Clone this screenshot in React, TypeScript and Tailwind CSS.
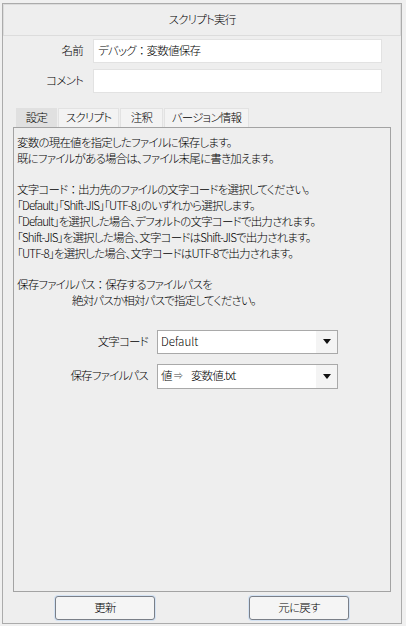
import React from 'react';

const tabs = [
  { label: '設定', w: 'w-[41px]', active: true },
  { label: 'スクリプト', w: 'w-[61px]', active: false },
  { label: '注釈', w: 'w-[43px]', active: false },
  { label: 'バージョン情報', w: 'w-[85px]', active: false },
];

// full-width colon without proportional spacing
const Colon = () => <span className="[font-feature-settings:normal]">：</span>;

function Arrow() {
  return (
    <div className="w-[21px] h-full bg-[#f4f4f4] flex items-center justify-center">
      <svg width="8" height="5" viewBox="0 0 8 5">
        <path d="M0 0 L8 0 L4 5 Z" fill="#111" />
      </svg>
    </div>
  );
}

export default function App() {
  return (
    <div className="w-[406px] h-[626px] bg-[#f0f0f0] pt-[3px] pl-[2px] text-[11.5px] tracking-[-0.8px] font-light text-black font-['Noto_Sans_CJK_JP','Noto_Sans',sans-serif] [font-feature-settings:'palt']">
      <div className="w-[400px] h-[621px] border border-[#ababab] bg-[#eeeeee] flex flex-col">
        {/* header */}
        <div className="h-[32px] border border-[#dcdcdc] flex items-center justify-center">
          スクリプト実行
        </div>

        <div className="mt-[3px] flex items-center h-[24px]">
          <div className="w-[80px] text-right">名前</div>
          <div className="ml-[10px] w-[289px] h-full bg-white border border-[#e2e2e2] flex items-center pl-[4px]">
            デバッグ<Colon />変数値保存
          </div>
        </div>
        <div className="mt-[6px] flex items-center h-[24px]">
          <div className="w-[80px] text-right">コメント</div>
          <div className="ml-[10px] w-[289px] h-full bg-white border border-[#e2e2e2]" />
        </div>

        {/* tabs */}
        <div className="mt-[15px] ml-[13px] flex gap-[1px] h-[19px]">
          {tabs.map((t) => (
            <div
              key={t.label}
              className={`${t.w} h-full flex items-center justify-center ${
                t.active ? 'bg-[#e0e0e0]' : 'bg-[#f3f3f3] border border-b-0 border-[#e2e2e2]'
              }`}
            >
              {t.label}
            </div>
          ))}
        </div>

        {/* panel */}
        <div className="mx-[10px] h-[465px] border border-[#a3a3a3] pt-[7px] pl-[3px] leading-[15.8px]">
          <p>変数の現在値を指定したファイルに保存します。</p>
          <p>既にファイルがある場合は、ファイル末尾に書き加えます。</p>
          <p>&nbsp;</p>
          <p>文字コード<Colon />出力先のファイルの文字コードを選択してください。</p>
          <p>「Default」「Shift-JIS」「UTF-8」のいずれから選択します。</p>
          <p>「Default」を選択した場合、デフォルトの文字コードで出力されます。</p>
          <p>「Shift-JIS」を選択した場合、文字コードはShift-JISで出力されます。</p>
          <p>「UTF-8」を選択した場合、文字コードはUTF-8で出力されます。</p>
          <p>&nbsp;</p>
          <p>保存ファイルパス<Colon />保存するファイルパスを</p>
          <p className="pl-[55px]">絶対パスか相対パスで指定してください。</p>

          <div className="mt-[21px] flex items-center h-[24px]">
            <div className="w-[131px] text-right">文字コード</div>
            <div className="ml-[9px] w-[181px] h-full bg-white border border-[#a9a9a9] flex items-center">
              <span className="flex-1 pl-[3px] tracking-normal">Default</span>
              <Arrow />
            </div>
          </div>
          <div className="mt-[10px] flex items-center h-[25px]">
            <div className="w-[131px] text-right">保存ファイルパス</div>
            <div className="ml-[9px] w-[181px] h-full bg-white border border-[#a9a9a9] flex items-center">
              <span className="flex-1 pl-[3px] flex items-center">
                値<span className="text-[9px] text-[#444] ml-[2px]">⇒</span>
                <span className="ml-[9px]">変数値.txt</span>
              </span>
              <Arrow />
            </div>
          </div>
        </div>

        {/* buttons */}
        <div className="mt-[4px] pl-[52px] flex gap-[94px]">
          <button className="w-[100px] h-[24px] rounded-[3px] bg-[#f5f5f5] border border-[#7a7f88] shadow-[0_0_0_1px_#d3e2f3]">
            更新
          </button>
          <button className="w-[100px] h-[24px] rounded-[3px] bg-[#f5f5f5] border border-[#7a7f88] shadow-[0_0_0_1px_#d3e2f3]">
            元に戻す
          </button>
        </div>
      </div>
    </div>
  );
}
